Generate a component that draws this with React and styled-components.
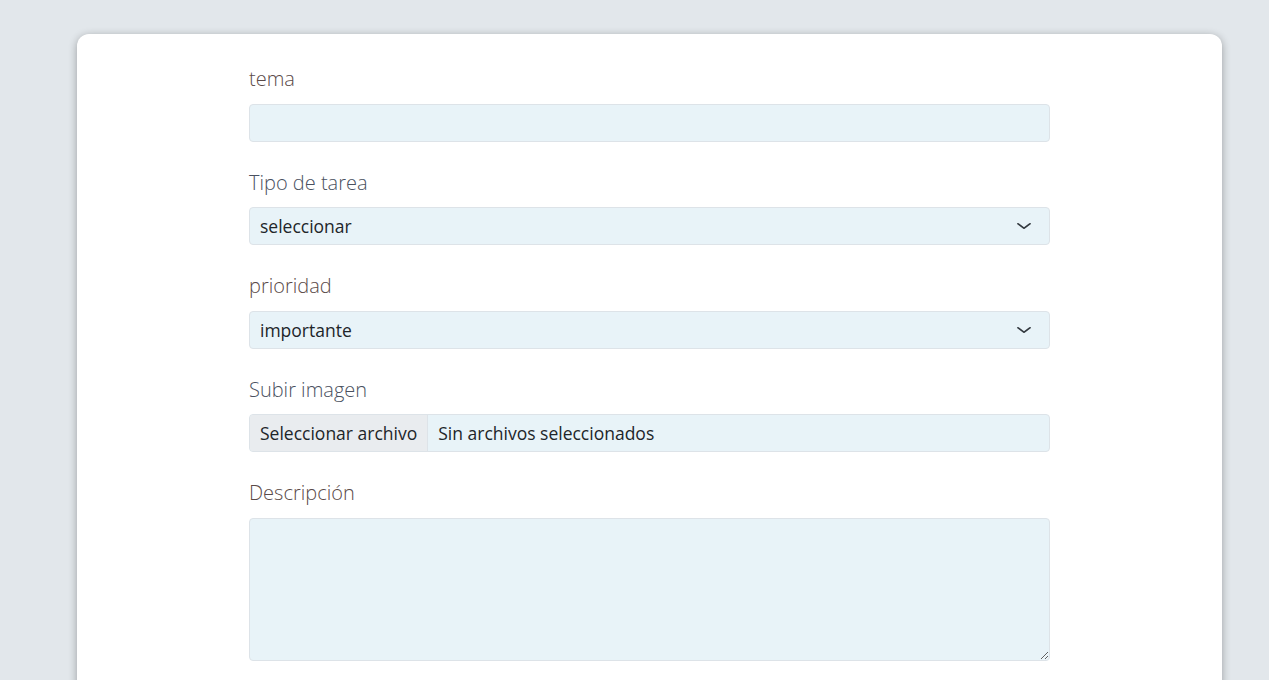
import React from "react";
import styled, { createGlobalStyle } from "styled-components";

const Global = createGlobalStyle`
  html, body { margin: 0; padding: 0; }
  body {
    background: #e2e7eb;
    font-family: "Open Sans", "Noto Sans", sans-serif;
    overflow: hidden;
  }
  * { box-sizing: border-box; }
`;

const Page = styled.div`
  padding: 34px 47px 0 77px;
  min-height: 680px;
`;

const Card = styled.div`
  background: #ffffff;
  border-radius: 12px;
  box-shadow: 0 2px 8px rgba(0, 0, 0, 0.32);
  padding: 30px 0 40px;
  min-height: 700px;
`;

const Form = styled.form`
  width: 801px;
  margin: 0 auto;
  display: flex;
  flex-direction: column;
  gap: 26px;
`;

const Field = styled.div`
  display: flex;
  flex-direction: column;
`;

const Label = styled.label`
  font-size: 20px;
  font-weight: 300;
  line-height: 30px;
  color: ${(p) => (p.$warm ? "#5a4a48" : "#4a5160")};
  margin-bottom: 9.5px;
`;

const fieldBase = `
  width: 100%;
  background: #e8f3f8;
  border: 1px solid #dde3e8;
  border-radius: 4px;
  font-family: "Open Sans", "Noto Sans", sans-serif;
  font-size: 17.5px;
  color: #212529;
  outline: none;
`;

const Input = styled.input`
  ${fieldBase}
  height: 38px;
  padding: 0 10px;
`;

const SelectWrap = styled.div`
  position: relative;
`;

const Select = styled.select`
  ${fieldBase}
  height: 38px;
  padding: 0 40px 0 10px;
  appearance: none;
  -webkit-appearance: none;
`;

const Chevron = styled.svg`
  position: absolute;
  right: 18px;
  top: 13px;
  width: 16px;
  height: 12px;
  pointer-events: none;
`;

const FileBox = styled.div`
  ${fieldBase}
  height: 38px;
  display: flex;
  align-items: stretch;
  overflow: hidden;
`;

const FileButton = styled.span`
  display: flex;
  align-items: center;
  padding: 0 10px;
  background: #e9ecef;
  border-right: 1px solid #dde3e8;
  white-space: nowrap;
`;

const FileName = styled.span`
  display: flex;
  align-items: center;
  padding: 0 10px;
  white-space: nowrap;
`;

const TextArea = styled.textarea`
  ${fieldBase}
  height: 143px;
  padding: 6px 10px;
  resize: vertical;
`;

function ChevronIcon() {
  return (
    <Chevron viewBox="0 0 16 16" preserveAspectRatio="none">
      <path
        d="M2 5l6 6 6-6"
        fill="none"
        stroke="#343a40"
        strokeWidth="2"
        strokeLinecap="round"
        strokeLinejoin="round"
      />
    </Chevron>
  );
}

export default function App() {
  return (
    <>
      <Global />
      <Page>
        <Card>
          <Form onSubmit={(e) => e.preventDefault()}>
            <Field>
              <Label $warm htmlFor="tema">tema</Label>
              <Input id="tema" type="text" />
            </Field>
            <Field>
              <Label htmlFor="tipo">Tipo de tarea</Label>
              <SelectWrap>
                <Select id="tipo" defaultValue="seleccionar">
                  <option value="seleccionar">seleccionar</option>
                </Select>
                <ChevronIcon />
              </SelectWrap>
            </Field>
            <Field>
              <Label $warm htmlFor="prioridad">prioridad</Label>
              <SelectWrap>
                <Select id="prioridad" defaultValue="importante">
                  <option value="importante">importante</option>
                </Select>
                <ChevronIcon />
              </SelectWrap>
            </Field>
            <Field>
              <Label>Subir imagen</Label>
              <FileBox>
                <FileButton>Seleccionar archivo</FileButton>
                <FileName>Sin archivos seleccionados</FileName>
              </FileBox>
            </Field>
            <Field>
              <Label $warm htmlFor="desc">Descripción</Label>
              <TextArea id="desc" />
            </Field>
          </Form>
        </Card>
      </Page>
    </>
  );
}
